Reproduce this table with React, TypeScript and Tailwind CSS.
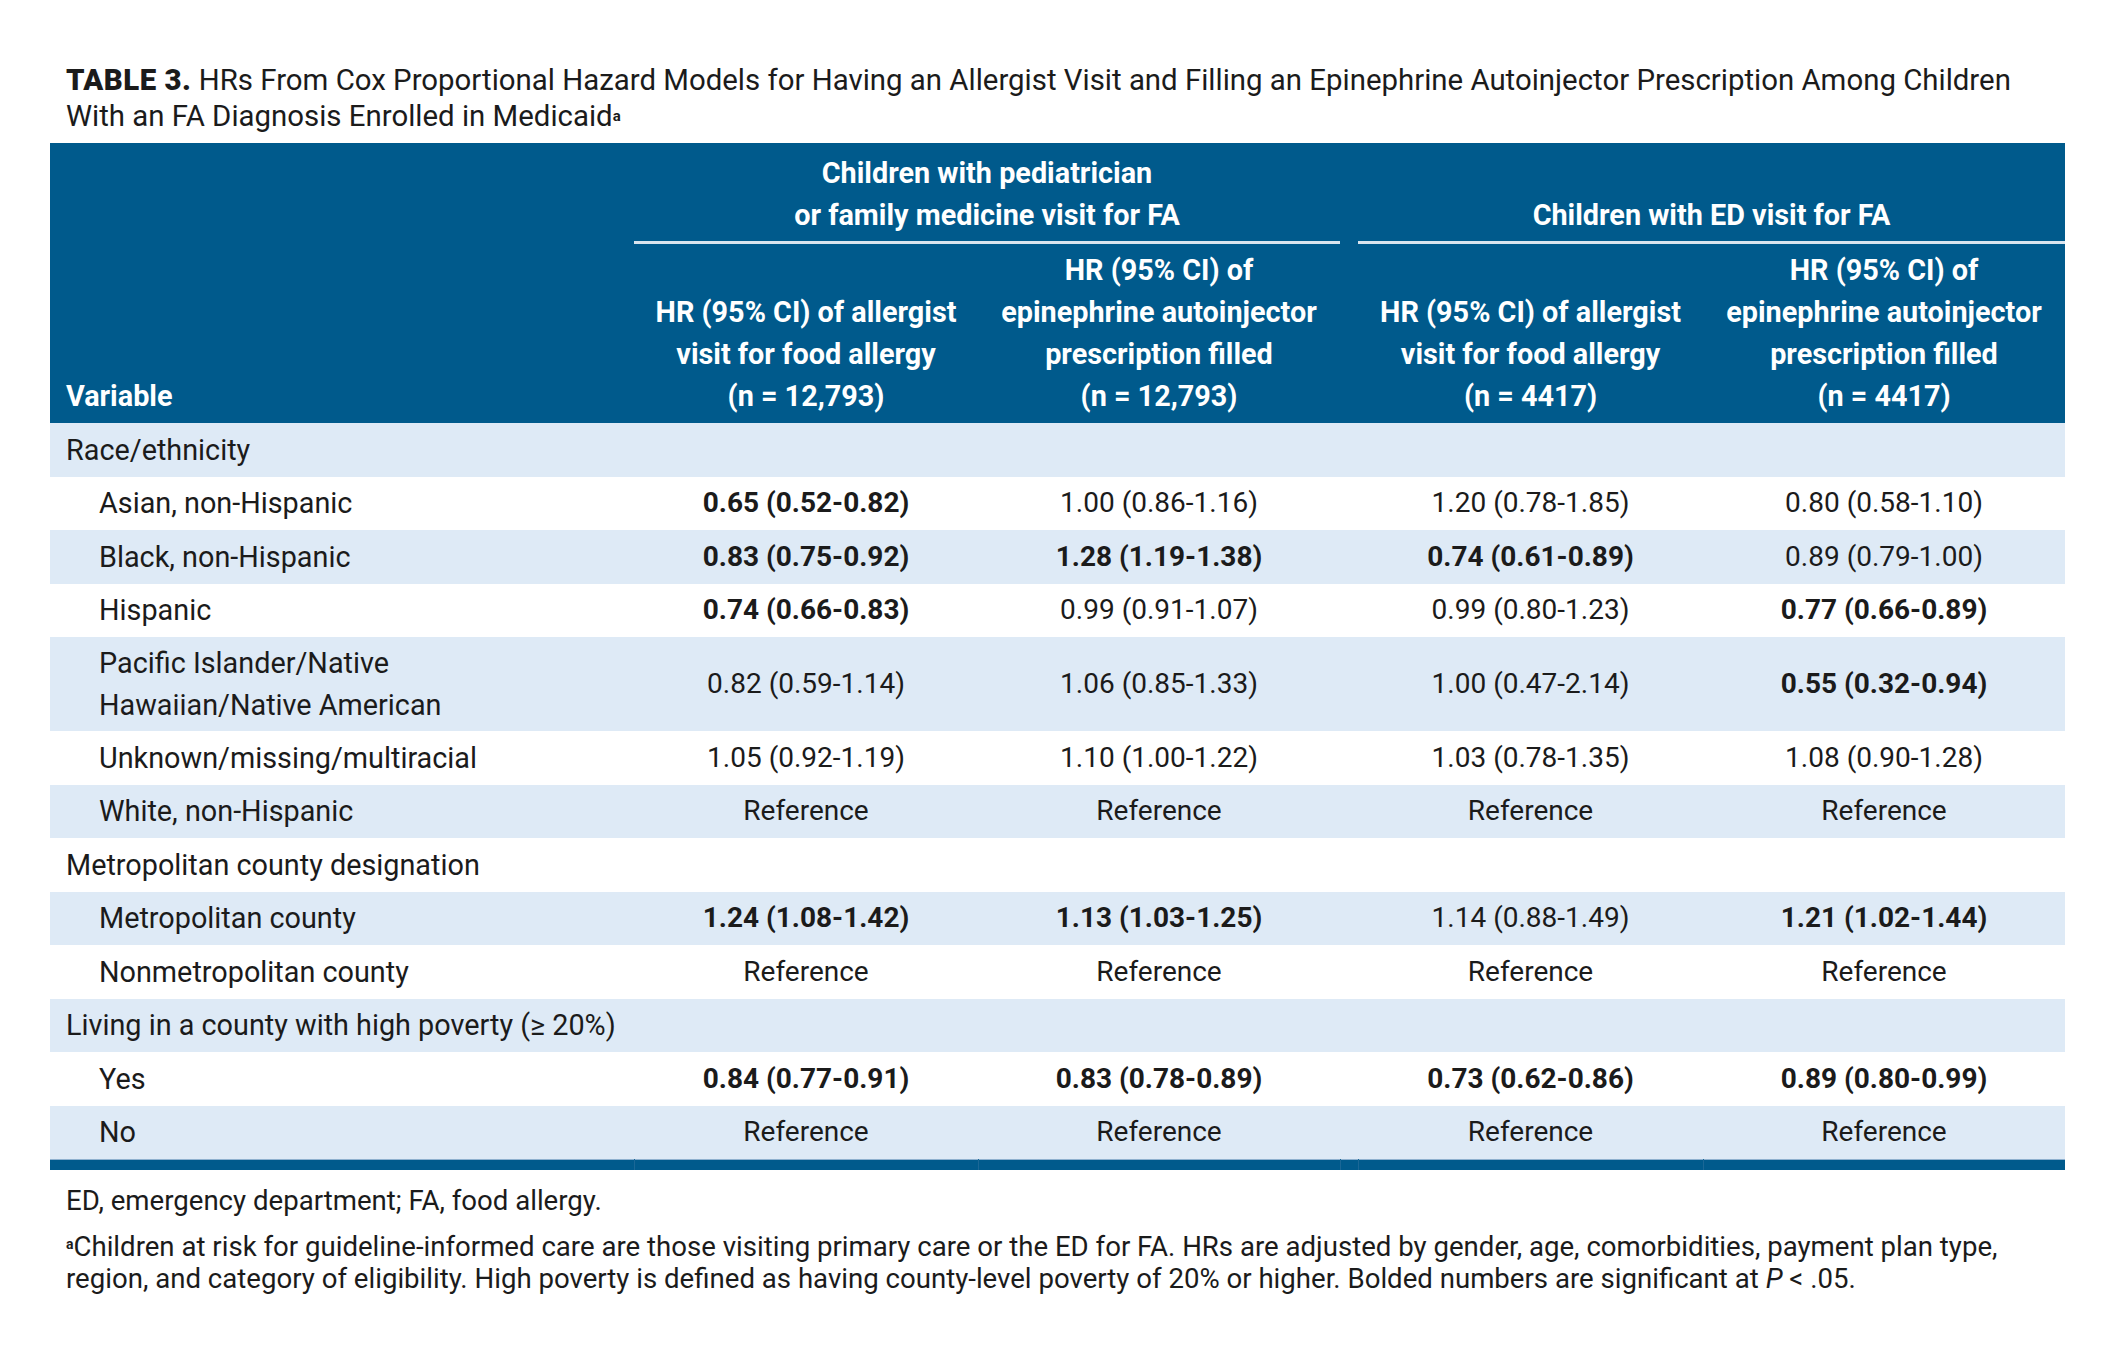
type Cell = { v: string; b?: boolean };
type Row = { label: string; cat?: boolean; tall?: boolean; vals?: Cell[] };

const ref: Cell[] = [{ v: "Reference" }, { v: "Reference" }, { v: "Reference" }, { v: "Reference" }];

const rows: Row[] = [
  { label: "Race/ethnicity", cat: true },
  {
    label: "Asian, non-Hispanic",
    vals: [{ v: "0.65 (0.52-0.82)", b: true }, { v: "1.00 (0.86-1.16)" }, { v: "1.20 (0.78-1.85)" }, { v: "0.80 (0.58-1.10)" }],
  },
  {
    label: "Black, non-Hispanic",
    vals: [{ v: "0.83 (0.75-0.92)", b: true }, { v: "1.28 (1.19-1.38)", b: true }, { v: "0.74 (0.61-0.89)", b: true }, { v: "0.89 (0.79-1.00)" }],
  },
  {
    label: "Hispanic",
    vals: [{ v: "0.74 (0.66-0.83)", b: true }, { v: "0.99 (0.91-1.07)" }, { v: "0.99 (0.80-1.23)" }, { v: "0.77 (0.66-0.89)", b: true }],
  },
  {
    label: "Pacific Islander/Native|Hawaiian/Native American",
    tall: true,
    vals: [{ v: "0.82 (0.59-1.14)" }, { v: "1.06 (0.85-1.33)" }, { v: "1.00 (0.47-2.14)" }, { v: "0.55 (0.32-0.94)", b: true }],
  },
  {
    label: "Unknown/missing/multiracial",
    vals: [{ v: "1.05 (0.92-1.19)" }, { v: "1.10 (1.00-1.22)" }, { v: "1.03 (0.78-1.35)" }, { v: "1.08 (0.90-1.28)" }],
  },
  { label: "White, non-Hispanic", vals: ref },
  { label: "Metropolitan county designation", cat: true },
  {
    label: "Metropolitan county",
    vals: [{ v: "1.24 (1.08-1.42)", b: true }, { v: "1.13 (1.03-1.25)", b: true }, { v: "1.14 (0.88-1.49)" }, { v: "1.21 (1.02-1.44)", b: true }],
  },
  { label: "Nonmetropolitan county", vals: ref },
  { label: "Living in a county with high poverty (≥ 20%)", cat: true },
  {
    label: "Yes",
    vals: [{ v: "0.84 (0.77-0.91)", b: true }, { v: "0.83 (0.78-0.89)", b: true }, { v: "0.73 (0.62-0.86)", b: true }, { v: "0.89 (0.80-0.99)", b: true }],
  },
  { label: "No", vals: ref },
];

function ValueCell({ c }: { c?: Cell }) {
  return <td className={"text-center text-[28px] " + (c?.b ? "font-bold" : "font-normal")}>{c?.v}</td>;
}

export default function App() {
  return (
    <div className="w-[2116px] h-[1352px] bg-white pt-[62px] pl-[50px] font-['Roboto','Noto_Sans',sans-serif] text-[#1b1b1b]">
      <h1 className="pl-[16px] text-[29.4px] leading-[36px] font-normal">
        <span className="font-black tracking-[0.5px]">TABLE 3.</span> HRs From Cox Proportional Hazard Models for Having an
        Allergist Visit and Filling an Epinephrine Autoinjector Prescription Among Children
        <br />
        With an FA Diagnosis Enrolled in Medicaid<span className="text-[15px] font-bold align-[5px]">a</span>
      </h1>

      <table className="mt-[9px] w-[2015px] table-fixed border-collapse text-[28.8px] leading-[42px]">
        <colgroup>
          <col className="w-[584px]" />
          <col className="w-[344px]" />
          <col className="w-[362px]" />
          <col className="w-[18px]" />
          <col className="w-[345px]" />
          <col className="w-[362px]" />
        </colgroup>
        <thead className="bg-[#005a8c] text-white font-bold">
          <tr>
            <th rowSpan={2} className="text-left align-bottom pl-[16px] pb-[6px] font-bold">
              Variable
            </th>
            <th colSpan={2} className="align-bottom pt-[9px] pb-[5px] border-b-[3px] border-[#d9e4ee] font-bold">
              Children with pediatrician
              <br />
              or family medicine visit for FA
            </th>
            <th className="border-b-[3px] border-[#005a8c]" />
            <th colSpan={2} className="align-bottom pt-[9px] pb-[5px] border-b-[3px] border-[#d9e4ee] font-bold">
              Children with ED visit for FA
            </th>
          </tr>
          <tr>
            <th className="align-bottom pt-[5px] pb-[6px] font-bold">
              HR (95% CI) of allergist
              <br />
              visit for food allergy
              <br />
              (n = 12,793)
            </th>
            <th className="align-bottom pt-[5px] pb-[6px] font-bold">
              HR (95% CI) of
              <br />
              epinephrine autoinjector
              <br />
              prescription filled
              <br />
              (n = 12,793)
            </th>
            <th />
            <th className="align-bottom pt-[5px] pb-[6px] font-bold">
              HR (95% CI) of allergist
              <br />
              visit for food allergy
              <br />
              (n = 4417)
            </th>
            <th className="align-bottom pt-[5px] pb-[6px] font-bold">
              HR (95% CI) of
              <br />
              epinephrine autoinjector
              <br />
              prescription filled
              <br />
              (n = 4417)
            </th>
          </tr>
        </thead>
        <tbody>
          {rows.map((r, i) => (
            <tr
              key={r.label}
              className={(i % 2 === 0 ? "bg-[#deeaf6] " : "bg-white ") + (r.tall ? "h-[94px]" : "h-[53.5px]")}
            >
              {r.cat ? (
                <td colSpan={6} className="pl-[16px] whitespace-nowrap">
                  {r.label}
                </td>
              ) : (
                <>
                  <td className="pl-[49px]">
                    {r.label.split("|").map((part, k) => (
                      <div key={k}>{part}</div>
                    ))}
                  </td>
                  <ValueCell c={r.vals?.[0]} />
                  <ValueCell c={r.vals?.[1]} />
                  <td />
                  <ValueCell c={r.vals?.[2]} />
                  <ValueCell c={r.vals?.[3]} />
                </>
              )}
            </tr>
          ))}
          <tr className="h-[11px] bg-[#005a8c] border-t border-[#8fb1cf]">
            <td />
            <td className="border-l border-[#1a6796]" />
            <td className="border-l border-[#1a6796]" />
            <td className="border-l border-[#1a6796]" />
            <td className="border-l border-[#1a6796]" />
            <td className="border-l border-[#1a6796]" />
          </tr>
        </tbody>
      </table>

      <div className="pl-[16px] mt-[15px] text-[27.6px] leading-[32px] font-normal">
        <p>ED, emergency department; FA, food allergy.</p>
        <p className="mt-[11px]">
          <span className="text-[14px] font-bold align-[7px]">a</span>Children at risk for guideline-informed care are those
          visiting primary care or the ED for FA. HRs are adjusted by gender, age, comorbidities, payment plan type,
          <br />
          region, and category of eligibility. High poverty is defined as having county-level poverty of 20% or higher.
          Bolded numbers are significant at <i>P</i> &lt; .05.
        </p>
      </div>
    </div>
  );
}
